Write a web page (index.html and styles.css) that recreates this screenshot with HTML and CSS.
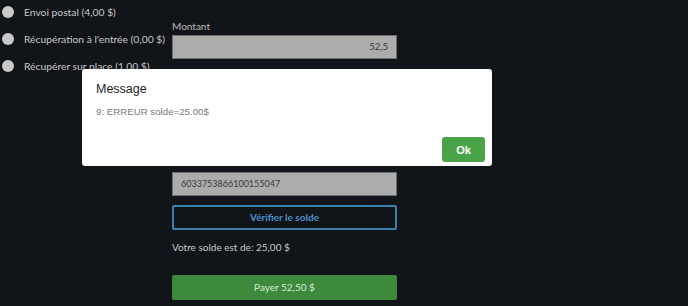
FILE: index.html
```html
<!DOCTYPE html>
<html lang="fr">
<head>
<meta charset="utf-8">
<link rel="stylesheet" href="styles.css">
</head>
<body>
<div class="page">
  <div class="options">
    <label class="opt"><span class="radio"></span><span>Envoi postal (4,00 $)</span></label>
    <label class="opt"><span class="radio"></span><span>Récupération à l'entrée (0,00 $)</span></label>
    <label class="opt"><span class="radio"></span><span>Récupérer sur place (1,00 $)</span></label>
  </div>
  <div class="form">
    <div class="label">Montant</div>
    <div class="input right">52,5</div>
    <div class="input card">6033753866100155047</div>
    <div class="btn-outline">Vérifier le solde</div>
    <div class="balance">Votre solde est de: 25,00 $</div>
    <div class="btn-pay">Payer 52,50 $</div>
  </div>
</div>
<div class="modal">
  <div class="modal-title">Message</div>
  <div class="modal-text">9: ERREUR solde=25.00$</div>
  <div class="modal-foot"><button class="ok">Ok</button></div>
</div>
</body>
</html>
```
FILE: styles.css
```css
html, body {
  margin: 0;
  padding: 0;
  background: #111418;
  width: 688px;
  height: 306px;
  overflow: hidden;
}
body {
  font-family: Lato, "Liberation Sans", sans-serif;
  color: #c8c8c8;
  font-size: 10px;
  position: relative;
}
.page {
  display: flex;
}
.options {
  width: 170px;
  padding: 5px 0 0 2px;
  display: flex;
  flex-direction: column;
  gap: 13px;
}
.opt {
  display: flex;
  align-items: center;
  gap: 10px;
  height: 14px;
  line-height: 14px;
  white-space: nowrap;
  font-size: 10.3px;
}
.radio {
  width: 12px;
  height: 12px;
  border-radius: 50%;
  background: #c9c9c9;
  flex: none;
}
.form {
  width: 225px;
  padding-top: 19px;
  display: flex;
  flex-direction: column;
}
.label {
  line-height: 14px;
  color: #bdbdbd;
  margin-bottom: 2px;
}
.input {
  box-sizing: border-box;
  height: 24px;
  background: #acacac;
  border: 1px solid #6e6e6e;
  color: #3a3a3a;
  font-size: 9px;
  line-height: 22px;
  padding: 0 8px;
}
.input.right {
  text-align: right;
  font-size: 9.5px;
}
.input.card {
  margin-top: 113px;
}
.btn-outline {
  box-sizing: border-box;
  margin-top: 9px;
  height: 25px;
  border: 2px solid #3a80ab;
  border-radius: 2px;
  color: #4b93c6;
  font-weight: bold;
  text-align: center;
  line-height: 21px;
}
.balance {
  margin-top: 10px;
  line-height: 14px;
  color: #c8c8c8;
}
.btn-pay {
  margin-top: 21px;
  height: 25px;
  border-radius: 2px;
  background: #3e8a3c;
  color: #d8e8d6;
  text-align: center;
  line-height: 25px;
}
.modal {
  position: absolute;
  left: 82px;
  top: 69px;
  width: 410px;
  height: 97px;
  box-sizing: border-box;
  background: #fff;
  border-radius: 3px;
  padding: 12px 7px 0 14px;
  font-family: "Liberation Sans", Arial, sans-serif;
}
.modal-title {
  font-size: 12.5px;
  line-height: 16px;
  color: #1e1e1e;
}
.modal-text {
  margin-top: 8px;
  font-size: 9.7px;
  line-height: 14px;
  color: #7a7a7a;
}
.modal-foot {
  display: flex;
  justify-content: flex-end;
  margin-top: 18px;
}
.ok {
  width: 43px;
  height: 25px;
  border: none;
  border-radius: 3px;
  background: #4aa346;
  color: #fff;
  font-family: "Liberation Sans", Arial, sans-serif;
  font-size: 11px;
  font-weight: bold;
  padding: 0;
}
```
